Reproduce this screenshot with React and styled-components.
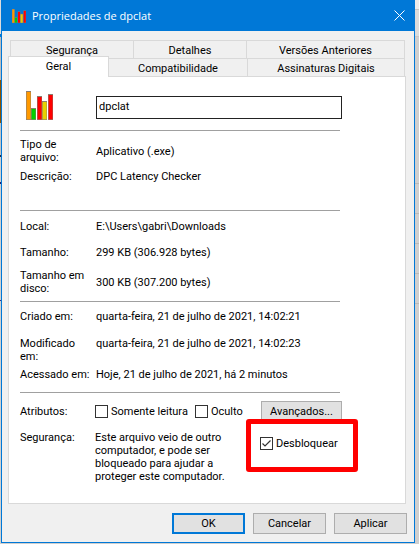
import React, { useState } from "react";
import styled, { createGlobalStyle } from "styled-components";

const GlobalStyle = createGlobalStyle`
  *, *::before, *::after { box-sizing: border-box; }
  body { margin: 0; background: #d0cfce; }
  button, input { font: inherit; color: inherit; }
`;

const Desktop = styled.div`
  display: grid;
  grid-template-columns: 1px minmax(0, 1fr) 4px;
  min-height: 100vh;
  align-items: start;
  font: 11px/13px Roboto, "Liberation Sans", sans-serif;
  color: #000;
`;

const LeftStrip = styled.div`
  align-self: stretch;
  background: linear-gradient(#dcdcdc 34px, #0078d7 34px 37px, #bdbdbd 37px 80px, #8a5200 80px 123px, #c4c4c4 123px 155px, #222a44 155px 157px, #d0d0d0 157px 182px, #1c1c70 182px 184px, #d0d0d0 184px 300px, #30308a 300px 301px, #d0d0d0 301px);
`;

const RightStrip = styled.div`
  align-self: stretch;
  background: linear-gradient(#ececec 9px, #c8c6c4 9px 10px, #dcdcdc 10px 36px, #c8c6c4 36px 37px, #d0cfce 37px 183px, #bdbab8 183px 184px, #d0cfce 184px 213px, #bdbab8 213px 214px, #d0cfce 214px 243px, #bdbab8 243px 244px, #d0cfce 244px 273px, #bdbab8 273px 274px, #d0cfce 274px 303px, #bdbab8 303px 304px, #d0cfce 304px);
`;

const Dialog = styled.section`
  border: 1px solid #0078d7;
  border-top: 0;
  background: #f0f0f0;
`;

const TitleBar = styled.header`
  display: flex;
  align-items: center;
  height: 31px;
  padding: 0 9px 0 10px;
  background: #0078d7;
  color: #fff;
`;

const Title = styled.h1`
  flex: 1;
  margin: 0 0 0 6px;
  font: 11px/16px "Open Sans", "Noto Sans", sans-serif;
`;

const CloseButton = styled.button`
  display: flex;
  padding: 0;
  border: 0;
  background: none;
`;

const Body = styled.div`
  padding: 9px 7px 8px 6px;
`;

const TabRow = styled.div`
  display: grid;
  grid-template-columns: ${(p) => p.$columns};
  height: 18px;
  margin: 0 2px 0 ${(p) => p.$inset}px;
`;

const Tab = styled.button`
  height: 19px;
  padding: 1px 0 0;
  border: 1px solid #d9d9d9;
  border-left-width: ${(p) => (p.$first ? 1 : 0)}px;
  background: #f0f0f0;
  text-align: center;
`;

const ActiveTab = styled(Tab)`
  position: relative;
  z-index: 1;
  height: 21px;
  margin-top: -2px;
  padding: 0 0 2px;
  border-bottom: 0;
  background: #fff;
`;

const Panel = styled.div`
  margin-right: 1px;
  padding: 14px 63px 20px 11px;
  border: 1px solid #d9d9d9;
  background: #fff;
`;

const FileHeader = styled.div`
  display: grid;
  grid-template-columns: 70px 1fr;
  align-items: start;
  height: 39px;
  padding-left: 6px;
`;

const NameInput = styled.input`
  width: 100%;
  height: 23px;
  margin-top: 5px;
  padding: 0 2px 3px;
  border: 1px solid #222;
  border-radius: 0;
  background: #fff;
  outline: 0;
`;

const Section = styled.dl`
  position: relative;
  margin: 0;
  padding: ${(p) => p.$padTop}px 0 ${(p) => p.$padBottom}px;

  &::before {
    content: "";
    position: absolute;
    inset: 0 2px auto 0;
    border-top: 1px solid #a0a0a0;
  }
`;

const Row = styled.div`
  display: grid;
  grid-template-columns: 70px 1fr;
  column-gap: 6px;
  align-items: ${(p) => p.$align || "center"};
  margin-top: ${(p) => p.$space || 0}px;
`;

const Term = styled.dt``;

const Value = styled.dd`
  margin: 0;
  white-space: nowrap;
`;

const Attributes = styled.dd`
  display: flex;
  align-items: center;
  margin: 0 0 0 -1px;
`;

const Security = styled.dd`
  display: grid;
  grid-template-columns: 140px 1fr;
  column-gap: 25px;
  margin: 0 0 0 -1px;
`;

const Note = styled.p`
  margin: 0;
`;

const Check = styled.label`
  display: flex;
  align-items: center;
  gap: 3px;
  margin-right: ${(p) => p.$after || 0}px;
  white-space: nowrap;
`;

const CheckInput = styled.input`
  appearance: none;
  flex: none;
  width: 13px;
  height: 13px;
  margin: 0;
  border: 1px solid #333;
  background: #fff;

  &:checked {
    background: #fff
      url("data:image/svg+xml,%3Csvg xmlns='http://www.w3.org/2000/svg' viewBox='0 0 11 11'%3E%3Cpath d='M1.5 5.5L4 8L9.5 2.5' fill='none' stroke='%23333' stroke-width='1.2'/%3E%3C/svg%3E");
  }
`;

const Highlighted = styled.div`
  position: relative;
  align-self: start;
  margin-top: 6px;

  &::after {
    content: "";
    position: absolute;
    top: -18px;
    left: -14px;
    width: 112px;
    height: 53px;
    border: 5px solid #ff0000;
    border-radius: 3px;
    pointer-events: none;
  }
`;

const Button = styled.button`
  width: ${(p) => p.$width || 73}px;
  height: 21px;
  padding: 0;
  border: ${(p) => (p.$primary ? "2px solid #0078d7" : "1px solid #adadad")};
  border-radius: 0;
  background: #e1e1e1;
`;

const AdvancedButton = styled(Button)`
  margin-left: auto;
`;

const Footer = styled.footer`
  display: flex;
  justify-content: flex-end;
  gap: 8px;
  margin-top: 9px;
`;

const bars = [
  { x: 0, y: 0, fill: "#ff9900" },
  { x: 5, y: 17, fill: "#00d000" },
  { x: 11, y: 5, fill: "#ff0000" },
  { x: 16, y: 10, fill: "#e8d000" },
  { x: 22, y: 3, fill: "#ff0000" },
];

function BarsIcon({ width, height }) {
  return (
    <svg width={width} height={height} viewBox="0 0 27 29" preserveAspectRatio="none" aria-hidden="true">
      {bars.map((b) => (
        <g key={b.x}>
          <rect x={b.x} y={b.y} width="5" height={29 - b.y} fill="#8c7d70" />
          <rect x={b.x + 0.6} y={b.y + 1} width="4" height={27.4 - b.y} fill={b.fill} />
        </g>
      ))}
    </svg>
  );
}

function Field({ label, children, space, align }) {
  return (
    <Row $space={space} $align={align}>
      <Term>{label}</Term>
      <Value>{children}</Value>
    </Row>
  );
}

function CheckBox({ label, initial = false, after }) {
  const [checked, setChecked] = useState(initial);
  return (
    <Check $after={after}>
      <CheckInput type="checkbox" checked={checked} onChange={(e) => setChecked(e.target.checked)} />
      {label}
    </Check>
  );
}

export default function App() {
  return (
    <>
      <GlobalStyle />
      <Desktop>
        <LeftStrip />
        <Dialog>
          <TitleBar>
            <BarsIcon width={14} height={14} />
            <Title>Propriedades de dpclat</Title>
            <CloseButton type="button" aria-label="Fechar">
              <svg width="11" height="11" viewBox="0 0 11 11">
                <path d="M.5.5l10 10M10.5.5l-10 10" stroke="#fff" fill="none" />
              </svg>
            </CloseButton>
          </TitleBar>
          <Body>
            <TabRow $columns="124fr 113fr 158fr" $inset={2}>
              <Tab type="button" $first>Segurança</Tab>
              <Tab type="button">Detalhes</Tab>
              <Tab type="button">Versões Anteriores</Tab>
            </TabRow>
            <TabRow $columns="101fr 139fr 157fr" $inset={0}>
              <ActiveTab type="button" $first>Geral</ActiveTab>
              <Tab type="button">Compatibilidade</Tab>
              <Tab type="button">Assinaturas Digitais</Tab>
            </TabRow>
            <Panel>
              <FileHeader>
                <BarsIcon width={27} height={29} />
                <NameInput type="text" aria-label="Nome do arquivo" defaultValue="dpclat" />
              </FileHeader>
              <Section $padTop={8} $padBottom={27}>
                <Field label="Tipo de arquivo:">Aplicativo (.exe)</Field>
                <Field label="Descrição:" space={6}>DPC Latency Checker</Field>
              </Section>
              <Section $padTop={10} $padBottom={6}>
                <Field label="Local:">E:\Users\gabri\Downloads</Field>
                <Field label="Tamanho:" space={13}>299 KB (306.928 bytes)</Field>
                <Field label="Tamanho em disco:" space={10}>300 KB (307.200 bytes)</Field>
              </Section>
              <Section $padTop={9} $padBottom={11}>
                <Field label="Criado em:">quarta-feira, 21 de julho de 2021, 14:02:21</Field>
                <Field label="Modificado em:" space={14} align="start">quarta-feira, 21 de julho de 2021, 14:02:23</Field>
                <Field label="Acessado em:" space={5}>Hoje, 21 de julho de 2021, há 2 minutos</Field>
              </Section>
              <Section $padTop={9} $padBottom={0}>
                <Row>
                  <Term>Atributos:</Term>
                  <Attributes>
                    <CheckBox label="Somente leitura" after={7} />
                    <CheckBox label="Oculto" />
                    <AdvancedButton type="button" $width={81}>Avançados...</AdvancedButton>
                  </Attributes>
                </Row>
                <Row $space={9} $align="start">
                  <Term>Segurança:</Term>
                  <Security>
                    <Note>Este arquivo veio de outro computador, e pode ser bloqueado para ajudar a proteger este computador.</Note>
                    <Highlighted>
                      <CheckBox label="Desbloquear" initial />
                    </Highlighted>
                  </Security>
                </Row>
              </Section>
            </Panel>
            <Footer>
              <Button type="button" $primary>OK</Button>
              <Button type="button">Cancelar</Button>
              <Button type="button">Aplicar</Button>
            </Footer>
          </Body>
        </Dialog>
        <RightStrip />
      </Desktop>
    </>
  );
}
